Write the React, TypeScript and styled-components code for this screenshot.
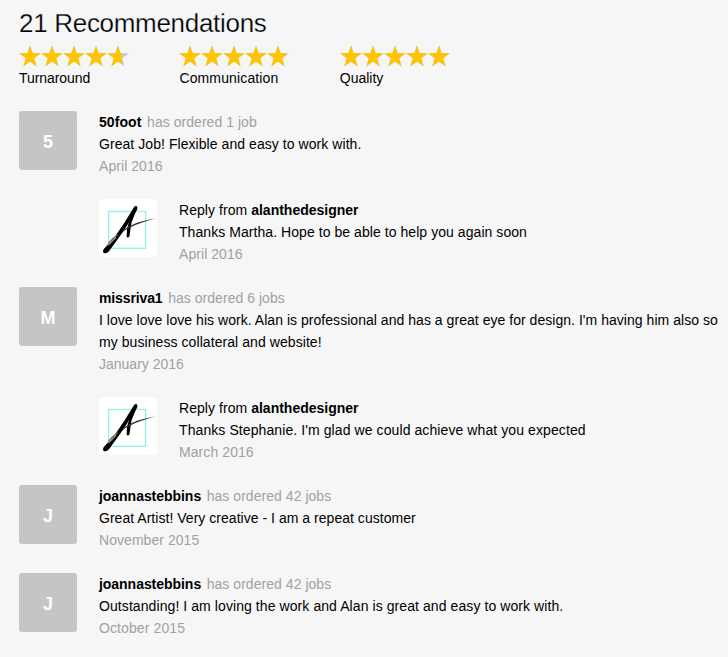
import React from "react";
import styled, { createGlobalStyle } from "styled-components";

const GlobalStyle = createGlobalStyle`
  * { box-sizing: border-box; }
  html, body { margin: 0; background: #f6f6f6; overflow: hidden; }
  body { font-family: "Liberation Sans", Arial, sans-serif; color: #000; }
`;

const Page = styled.main`
  width: 728px;
  height: 657px;
  padding: 9px 0 0 19px;
  background: #f6f6f6;
  font-size: 14px;
  line-height: 22px;
  overflow: hidden;
`;

const Title = styled.h1`
  margin: 0;
  height: 36px;
  font-size: 26px;
  font-weight: 300;
  line-height: 28px;
  letter-spacing: -0.3px;
  white-space: nowrap;
  -webkit-text-stroke: 0.25px #f6f6f6;
`;

const Ratings = styled.div`
  display: flex;
  height: 66px;
`;

const Rating = styled.div`
  width: 160.4px;
`;

const RatingStars = styled.svg`
  display: block;
  width: 110px;
  height: 22px;
`;

const Text = styled.span<{ $spacing?: number }>`
  letter-spacing: ${(p) => p.$spacing ?? 0}px;
  white-space: nowrap;
`;

const Muted = styled(Text)`
  color: #a1a1a1;
`;

const Strong = styled(Text)`
  font-weight: 700;
`;

const Entry = styled.article<{ $reply?: boolean }>`
  display: flex;
  gap: 22px;
  margin-left: ${(p) => (p.$reply ? 80 : 0)}px;
  margin-bottom: 22px;
`;

const Avatar = styled.div`
  flex: none;
  width: 58px;
  height: 59px;
  border-radius: 3px;
  background: #c5c5c5;
  color: #fff;
  font-size: 18px;
  font-weight: 700;
  line-height: 62px;
  text-align: center;
`;

const Logo = styled.svg`
  flex: none;
  width: 58px;
  height: 58px;
  border-radius: 3px;
  background: #fff;
`;

const Body = styled.div`
  display: flex;
  flex-direction: column;
`;

const Line = styled.div`
  display: flex;
  height: 22px;
`;

const Heading = styled(Line)<{ $gap: number }>`
  gap: ${(p) => p.$gap}px;
`;

const STAR =
  "M11 0.6 L13.6 8.3 L21.7 8.3 L15.2 13.2 L17.6 21.2 L11 16.4 L4.4 21.2 L6.8 13.2 L0.3 8.3 L8.4 8.3 Z";

function Stars({ id, filled }: { id: string; filled: number }) {
  const row = [0, 1, 2, 3, 4].map((i) => (
    <path key={i} d={STAR} transform={`translate(${i * 22} 0)`} />
  ));
  return (
    <RatingStars viewBox="0 0 110 22">
      <clipPath id={id}>
        <rect width={filled} height="22" />
      </clipPath>
      <g fill="#c8c8c8">{row}</g>
      <g fill="#ffc400" clipPath={`url(#${id})`}>{row}</g>
    </RatingStars>
  );
}

function DesignerLogo() {
  return (
    <Logo viewBox="0 0 58 58">
      <rect x="9.6" y="12.5" width="37" height="36.8" fill="none" stroke="#9af0ea" strokeWidth="1.4" />
      <path d="M34.8 8.4 Q36.4 6 38.2 7.6 Q39 9.5 37.2 12 L24.6 32 L10 52.3 Q7 55.4 4.4 53.8 Q3.2 51.2 6.2 48.6 L16 37.5 L25.5 23.5 Z" fill="#000" />
      <path d="M35.6 11 L37.8 10.5 Q34.6 18 32.4 24 L30.4 37.6 Q29 39.4 27.6 37.8 L28 30 Q30 21 35.6 11 Z" fill="#000" />
      <path d="M24 31.2 Q31 26.4 38 23.8 Q47 20.8 57.2 19.3 Q46 22.2 37 25.8 Q30 28.8 24 32.4 Z" fill="#333" />
      <path d="M8.8 47 Q9.5 41.5 14 39 L19 35.8" fill="none" stroke="#777" strokeWidth="1" />
      <path d="M10 45.6 L17 38" stroke="#999" strokeWidth="1.4" />
    </Logo>
  );
}

type Item = {
  name: string;
  nameSpacing?: number;
  detail?: string;
  detailSpacing?: number;
  lines: [string, number][];
  date: string;
  dateSpacing?: number;
  reply?: boolean;
};

const items: Item[] = [
  {
    name: "50foot",
    nameSpacing: 0.08,
    detail: "has ordered 1 job",
    detailSpacing: 0.04,
    lines: [["Great Job! Flexible and easy to work with.", 0.06]],
    date: "April 2016",
    dateSpacing: 0.06,
  },
  {
    name: "alanthedesigner",
    lines: [["Thanks Martha. Hope to be able to help you again soon", 0.06]],
    date: "April 2016",
    dateSpacing: 0.06,
    reply: true,
  },
  {
    name: "missriva1",
    nameSpacing: -0.12,
    detail: "has ordered 6 jobs",
    detailSpacing: 0.04,
    lines: [
      ["I love love love his work. Alan is professional and has a great eye for design. I'm having him also so", 0.036],
      ["my business collateral and website!", 0.07],
    ],
    date: "January 2016",
    dateSpacing: 0,
  },
  {
    name: "alanthedesigner",
    lines: [["Thanks Stephanie. I'm glad we could achieve what you expected", 0.09]],
    date: "March 2016",
    dateSpacing: 0.08,
    reply: true,
  },
  {
    name: "joannastebbins",
    nameSpacing: -0.04,
    detail: "has ordered 42 jobs",
    detailSpacing: 0.04,
    lines: [["Great Artist! Very creative - I am a repeat customer", 0.03]],
    date: "November 2015",
    dateSpacing: 0.05,
  },
  {
    name: "joannastebbins",
    nameSpacing: -0.04,
    detail: "has ordered 42 jobs",
    detailSpacing: 0.04,
    lines: [["Outstanding! I am loving the work and Alan is great and easy to work with.", 0.08]],
    date: "October 2015",
    dateSpacing: 0.1,
  },
];

export default function App() {
  return (
    <>
      <GlobalStyle />
      <Page>
        <Title>21 Recommendations</Title>
        <Ratings>
          <Rating><Stars id="turnaround" filled={102.7} /><Text $spacing={-0.06}>Turnaround</Text></Rating>
          <Rating><Stars id="communication" filled={107.5} /><Text $spacing={0.14}>Communication</Text></Rating>
          <Rating><Stars id="quality" filled={110} /><Text>Quality</Text></Rating>
        </Ratings>
        {items.map((item, i) => (
          <Entry key={i} $reply={item.reply}>
            {item.reply ? <DesignerLogo /> : <Avatar>{item.name[0].toUpperCase()}</Avatar>}
            <Body>
              <Heading $gap={item.reply ? 4 : 5.6}>
                {item.reply && <Text $spacing={0.05}>Reply from</Text>}
                <Strong $spacing={item.nameSpacing}>{item.name}</Strong>
                {item.detail && <Muted $spacing={item.detailSpacing}>{item.detail}</Muted>}
              </Heading>
              {item.lines.map(([text, spacing]) => (
                <Line key={text}><Text $spacing={spacing}>{text}</Text></Line>
              ))}
              <Line><Muted $spacing={item.dateSpacing}>{item.date}</Muted></Line>
            </Body>
          </Entry>
        ))}
      </Page>
    </>
  );
}
